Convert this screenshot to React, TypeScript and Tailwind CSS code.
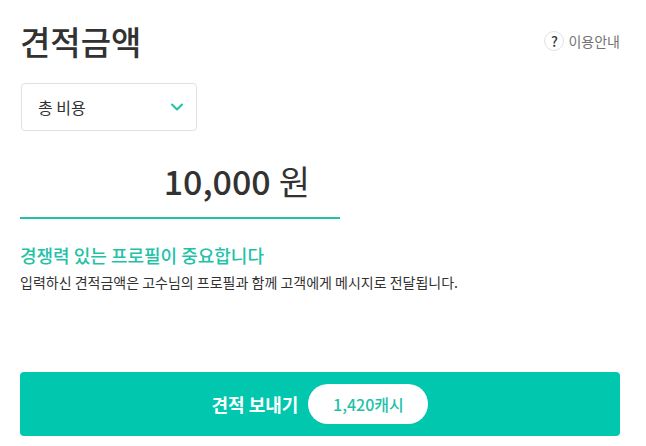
import React, { useState } from "react";

const QuoteForm = () => {
  const [costType, setCostType] = useState("total");
  const [price, setPrice] = useState("10,000");

  return (
    <main className="bg-white pt-5 pr-[26px] pb-2 pl-5 font-['Noto_Sans_CJK_KR','Noto_Sans',sans-serif] text-[#323232]">
      <header className="flex items-center justify-between">
        <h1 className="text-[33px] leading-[42px] font-medium">견적금액</h1>
        <button type="button" className="flex items-center gap-1 text-sm text-[#737373]">
          <span className="flex size-5 items-center justify-center rounded-full border border-[#e1e1e1] text-sm font-medium text-[#323232]">
            ?
          </span>
          이용안내
        </button>
      </header>

      <div className="relative mt-[21px] ml-px w-44">
        <select
          aria-label="비용 종류"
          value={costType}
          onChange={(e) => setCostType(e.target.value)}
          className="h-12 w-full appearance-none rounded border border-[#e1e1e1] bg-white px-4 text-base"
        >
          <option value="total">총 비용</option>
          <option value="hour">시간당 비용</option>
        </select>
        <svg
          className="pointer-events-none absolute top-5 right-3 h-2 w-4"
          viewBox="0 0 16 8"
          fill="none"
          stroke="#1fc2a7"
          strokeWidth="2"
          strokeLinecap="round"
          strokeLinejoin="round"
        >
          <path d="M3 1.5l5 5 5-5" />
        </svg>
      </div>

      <label className="mt-6 flex h-16 w-80 items-center border-b-2 border-[#1fc2a7] pr-[30px] pb-[10px] text-[34px] leading-[50px]">
        <input
          type="text"
          inputMode="numeric"
          aria-label="견적금액"
          value={price}
          onChange={(e) => setPrice(e.target.value)}
          className="w-full min-w-0 flex-1 text-right font-medium outline-none"
        />
        <span className="ml-2">원</span>
      </label>

      <section className="mt-6">
        <h2 className="text-lg leading-6 font-medium text-[#1fc2a7]">경쟁력 있는 프로필이 중요합니다</h2>
        <p className="mt-1 text-sm leading-[22px]">
          입력하신 견적금액은 고수님의 프로필과 함께 고객에게 메시지로 전달됩니다.
        </p>
      </section>

      <button
        type="button"
        className="mt-[79px] flex h-16 w-full items-center justify-center gap-[10px] rounded bg-[#00c7ae] text-lg font-bold text-white"
      >
        견적 보내기
        <span className="flex h-10 w-[120px] items-center justify-center rounded-full bg-white text-base font-medium text-[#1fc2a7]">
          1,420캐시
        </span>
      </button>
    </main>
  );
};

export default QuoteForm;
